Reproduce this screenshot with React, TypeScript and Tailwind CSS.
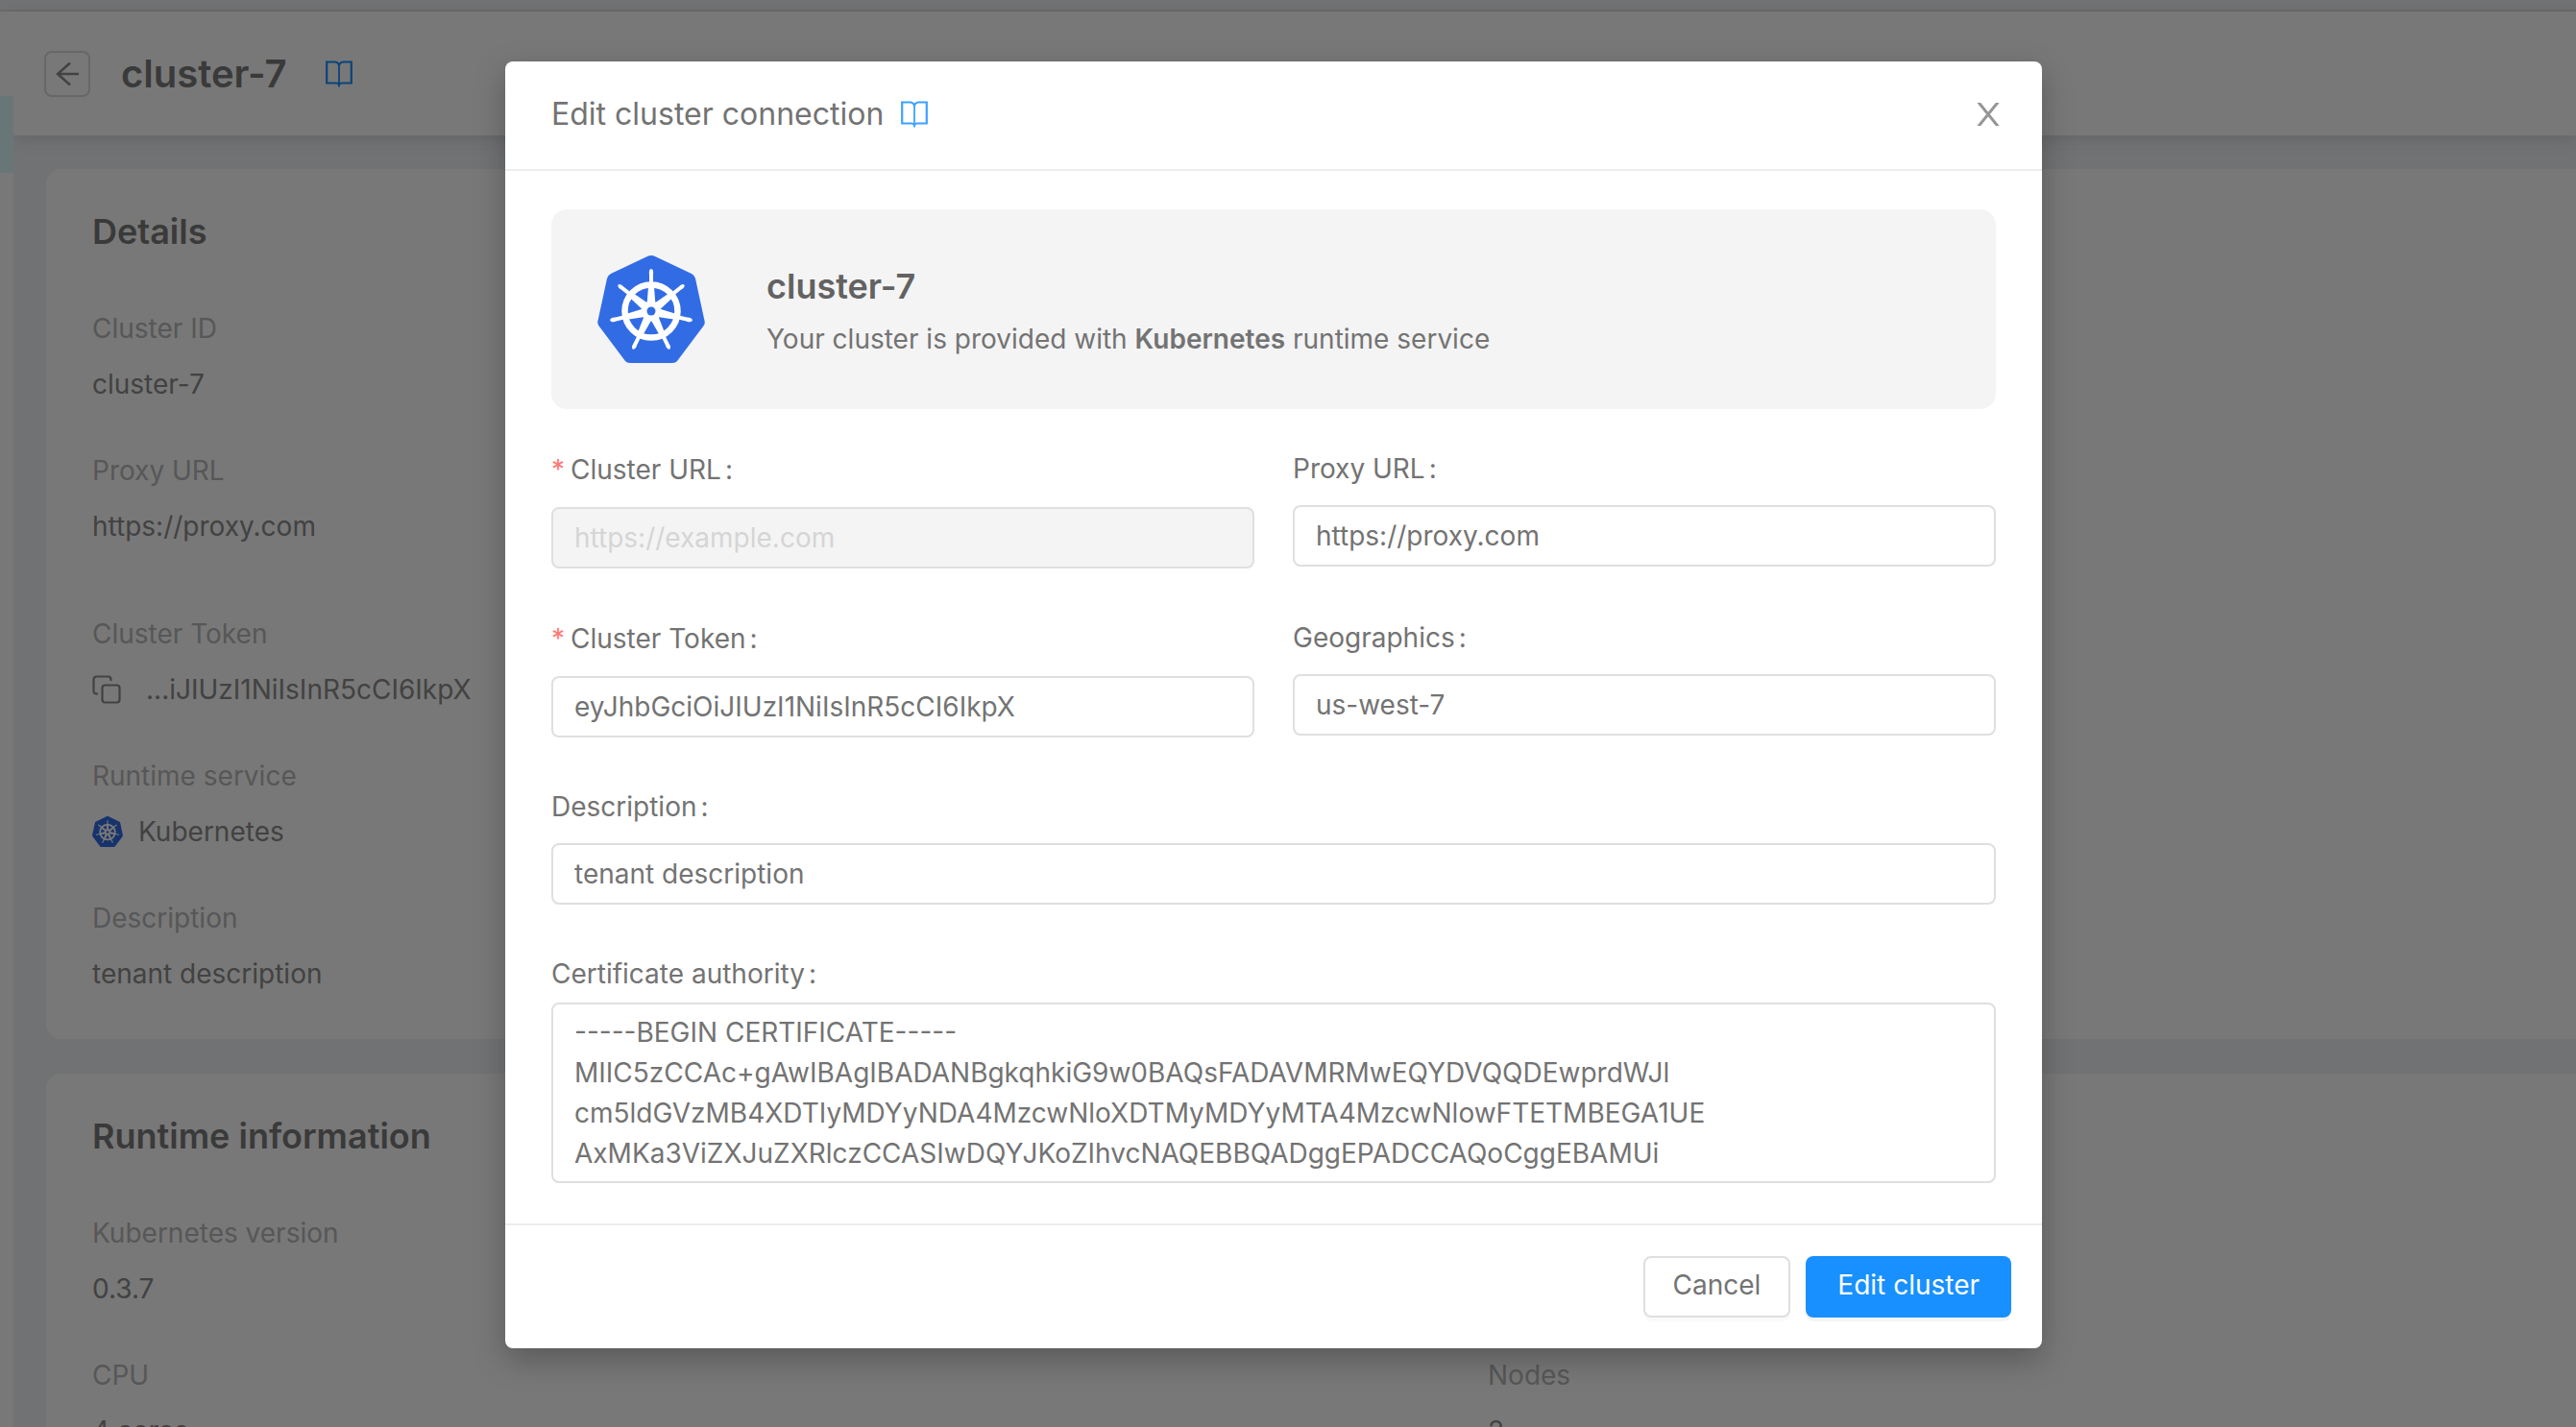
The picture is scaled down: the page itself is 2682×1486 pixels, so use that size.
import React from "react";

function BookIcon({ className }: { className: string }) {
  return (
    <svg className={className} viewBox="0 0 28 28" fill="none" stroke="currentColor" aria-hidden="true">
      <path
        strokeWidth="2.200"
        d="M14 25.500Q13.500 23.500 11 23.500H1.200V1.500H9.500Q12.500 1.500 14 4.500Q15.500 1.500 18.500 1.500H26.800V23.500H17Q14.500 23.500 14 25.500"
      />
      <path strokeWidth="1.800" d="M14 4.500V27.500" />
    </svg>
  );
}

function CopyIcon() {
  return (
    <svg className="size-[30px] shrink-0" viewBox="0 0 30 30" fill="none" stroke="currentColor" strokeWidth="2.200" aria-hidden="true">
      <rect x="10.500" y="10.500" width="18" height="18" rx="3" />
      <path d="M6 19.500H4.500A3 3 0 0 1 1.500 16.500V4.500A3 3 0 0 1 4.500 1.500H16.500A3 3 0 0 1 19.500 4.500V6" />
    </svg>
  );
}

const SPOKES = [0, 1, 2, 3, 4, 5, 6].map((i) => (i * 360) / 7);

function KubernetesLogo({ className }: { className: string }) {
  return (
    <svg className={className} viewBox="0 0 112 112" role="img" aria-label="Kubernetes logo">
      <path
        d="M52 1Q56 -1 60 1L98 19Q101 20.500 102 24L111.500 68Q112.500 71 110 74L83 110Q81.500 112 78 112H34Q30.500 112 29 110L2 74Q-.5 71 .5 68L10 24Q11 20.500 14 19Z"
        fill="#326ce5"
      />
      <g fill="#fff">
        {SPOKES.map((angle) => (
          <g key={angle} transform={`rotate(${angle} 56 58)`}>
            <path d="M51.500 52L53.200 30H58.800L60.500 52Z" />
            <path d="M54 31V20Q53.200 14.500 56 14Q58.800 14.500 58 20V31Z" />
          </g>
        ))}
        <circle cx="56" cy="58" r="10.500" />
      </g>
      <circle cx="56" cy="58" r="27.500" fill="none" stroke="#fff" strokeWidth="6.500" />
      <circle cx="56" cy="58" r="4.500" fill="#326ce5" />
    </svg>
  );
}

function Item({ label, children }: { label: string; children: React.ReactNode }) {
  return (
    <div className="flex flex-col gap-3.5">
      <dt className="text-[#bababa]">{label}</dt>
      <dd className="flex h-11 items-center">{children}</dd>
    </div>
  );
}

function Card({ title, children }: { title: string; children: React.ReactNode }) {
  return (
    <section className="rounded-2xl bg-white px-12 pt-10 pb-[46px]">
      <h2 className="text-[36px] leading-[50px] font-semibold text-[#7c7c7c]">{title}</h2>
      {children}
    </section>
  );
}

type FieldProps = {
  id: string;
  label: string;
  value?: string;
  placeholder?: string;
  required?: boolean;
  disabled?: boolean;
};

function FieldLabel({ id, label, required }: { id: string; label: string; required?: boolean }) {
  return (
    <label htmlFor={id} className={required ? "flex h-[46px] items-center" : "flex h-11 items-center"}>
      {required && <span className="mr-1.5 text-[#ff7875]">*</span>}
      {label}
      <span className="ml-1">:</span>
    </label>
  );
}

function Field({ id, label, value, placeholder, required, disabled }: FieldProps) {
  return (
    <div className="flex flex-col gap-4">
      <FieldLabel id={id} label={label} required={required} />
      <input
        id={id}
        type="text"
        defaultValue={value}
        placeholder={placeholder}
        required={required}
        disabled={disabled}
        className="h-16 w-full rounded-lg border-2 border-[#dfdfdf] bg-white px-[22px] placeholder:text-[#d5d5d5] disabled:bg-[#f4f4f4]"
      />
    </div>
  );
}

const CERTIFICATE = `-----BEGIN CERTIFICATE-----
MIIC5zCCAc+gAwIBAgIBADANBgkqhkiG9w0BAQsFADAVMRMwEQYDVQQDEwprdWJl
cm5ldGVzMB4XDTIyMDYyNDA4MzcwNloXDTMyMDYyMTA4MzcwNlowFTETMBEGA1UE
AxMKa3ViZXJuZXRlczCCASIwDQYJKoZIhvcNAQEBBQADggEPADCCAQoCggEBAMUi`;

function Dialog() {
  return (
    <form
      role="dialog"
      aria-label="Edit cluster connection"
      className="w-[1600px] max-w-full rounded-lg bg-white text-[#737373] shadow-[0_12px_32px_rgba(0,0,0,0.25)]"
    >
      <header className="flex items-center border-b-2 border-[#ededed] pt-[30px] pr-11 pb-8 pl-12">
        <h2 className="text-[32px] leading-[50px]">Edit cluster connection</h2>
        <a href="#docs" aria-label="Documentation" className="ml-[18px] text-[#3da2ff]">
          <BookIcon className="size-7" />
        </a>
        <button type="button" aria-label="Close" className="ml-auto text-[#959595]">
          <svg className="size-6" viewBox="0 0 24 24" fill="none" stroke="currentColor" strokeWidth="3" aria-hidden="true">
            <path d="M1.500 -1L22.500 25M22.500 -1L1.500 25" />
          </svg>
        </button>
      </header>

      <div className="px-12 pt-10 pb-[42px]">
        <div className="flex items-center rounded-2xl bg-[#f4f4f4] p-12">
          <KubernetesLogo className="size-28 shrink-0" />
          <div className="ml-16 pt-1">
            <h3 className="text-[36px] leading-[50px] font-semibold text-[#626262]">cluster-7</h3>
            <p className="mt-2 leading-11">
              Your cluster is provided with <strong className="font-semibold">Kubernetes</strong> runtime service
            </p>
          </div>
        </div>

        <div className="mt-10 grid grid-cols-2 gap-x-10 gap-y-[50px]">
          <Field id="cluster-url" label="Cluster URL" placeholder="https://example.com" required disabled />
          <Field id="proxy-url" label="Proxy URL" value="https://proxy.com" />
          <Field id="cluster-token" label="Cluster Token" value="eyJhbGciOiJIUzI1NiIsInR5cCI6IkpX" required />
          <Field id="geographics" label="Geographics" value="us-west-7" />
          <div className="col-span-2">
            <Field id="description" label="Description" value="tenant description" />
          </div>
          <div className="col-span-2 flex flex-col gap-2">
            <FieldLabel id="certificate" label="Certificate authority" />
            <textarea
              id="certificate"
              rows={4}
              defaultValue={CERTIFICATE}
              className="block h-[188px] w-full resize-none overflow-hidden rounded-lg border-2 border-[#dfdfdf] bg-white px-[22px] py-2 leading-[42px]"
            />
          </div>
        </div>
      </div>

      <footer className="flex justify-end gap-4 border-t-2 border-[#ededed] p-8">
        <button type="button" className="flex h-16 items-center rounded-lg border-2 border-[#dfdfdf] bg-white px-[29px] pb-1 shadow-[0_4px_0_rgba(0,0,0,0.02)]">
          Cancel
        </button>
        <button type="submit" className="flex h-16 items-center rounded-lg bg-[#1890ff] px-[33px] pb-1 text-white shadow-[0_4px_0_rgba(0,0,0,0.04)]">
          Edit cluster
        </button>
      </footer>
    </form>
  );
}

export default function App() {
  return (
    <div className="relative h-screen overflow-hidden bg-[#f0f2f5] font-['Inter',sans-serif] text-[28px] leading-11 text-[#8c8c8c]">
      <div className="flex h-full flex-col">
        <div className="h-3 shrink-0 border-b-2 border-[#e0e0e0]" />
        <div className="flex min-h-0 flex-1">
          <nav aria-label="Main" className="z-10 w-3.5 shrink-0 bg-white pt-22">
            <a href="#clusters" aria-label="Clusters" className="block h-20 bg-[#e0fbff]" />
          </nav>
          <main className="min-w-0 flex-1">
            <header className="flex h-[129px] items-center bg-white px-8 shadow-[0_4px_16px_rgba(0,21,41,0.12)]">
              <button type="button" aria-label="Back" className="flex size-12 items-center justify-center rounded-lg border-2 border-[#dadada]">
                <svg className="size-6 shrink-0" viewBox="0 0 24 24" fill="none" stroke="currentColor" strokeWidth="2.500" aria-hidden="true">
                  <path d="M24 12H2M15 .5L2 12L15 23.500" />
                </svg>
              </button>
              <h1 className="ml-8 text-[40px] leading-[50px] font-semibold text-[#7c7c7c]">cluster-7</h1>
              <a href="#docs" aria-label="Documentation" className="ml-10 text-[#1890ff]">
                <BookIcon className="size-7" />
              </a>
            </header>
            <div className="-mr-80 flex flex-col gap-9 py-[35px] pl-[34px]">
              <Card title="Details">
                <dl className="mt-[54px] flex flex-col gap-[46px]">
                  <Item label="Cluster ID">cluster-7</Item>
                  <div className="pb-[22px]">
                    <Item label="Proxy URL">https://proxy.com</Item>
                  </div>
                  <Item label="Cluster Token">
                    <button type="button" aria-label="Copy token" className="mr-[26px]"><CopyIcon /></button>
                    ...iJIUzI1NiIsInR5cCI6IkpX
                  </Item>
                  <Item label="Runtime service">
                    <KubernetesLogo className="mr-4 size-8" />
                    Kubernetes
                  </Item>
                  <Item label="Description">tenant description</Item>
                </dl>
              </Card>
              <Card title="Runtime information">
                <dl className="mt-[54px] grid grid-cols-2 gap-x-12 gap-y-[46px]">
                  <div className="col-span-2">
                    <Item label="Kubernetes version">0.3.7</Item>
                  </div>
                  <Item label="CPU">4 cores</Item>
                  <Item label="Nodes">2</Item>
                </dl>
              </Card>
            </div>
          </main>
        </div>
      </div>
      <div className="absolute inset-0 z-20 flex items-start justify-center bg-black/53 pt-16 pr-[30px]">
        <Dialog />
      </div>
    </div>
  );
}
